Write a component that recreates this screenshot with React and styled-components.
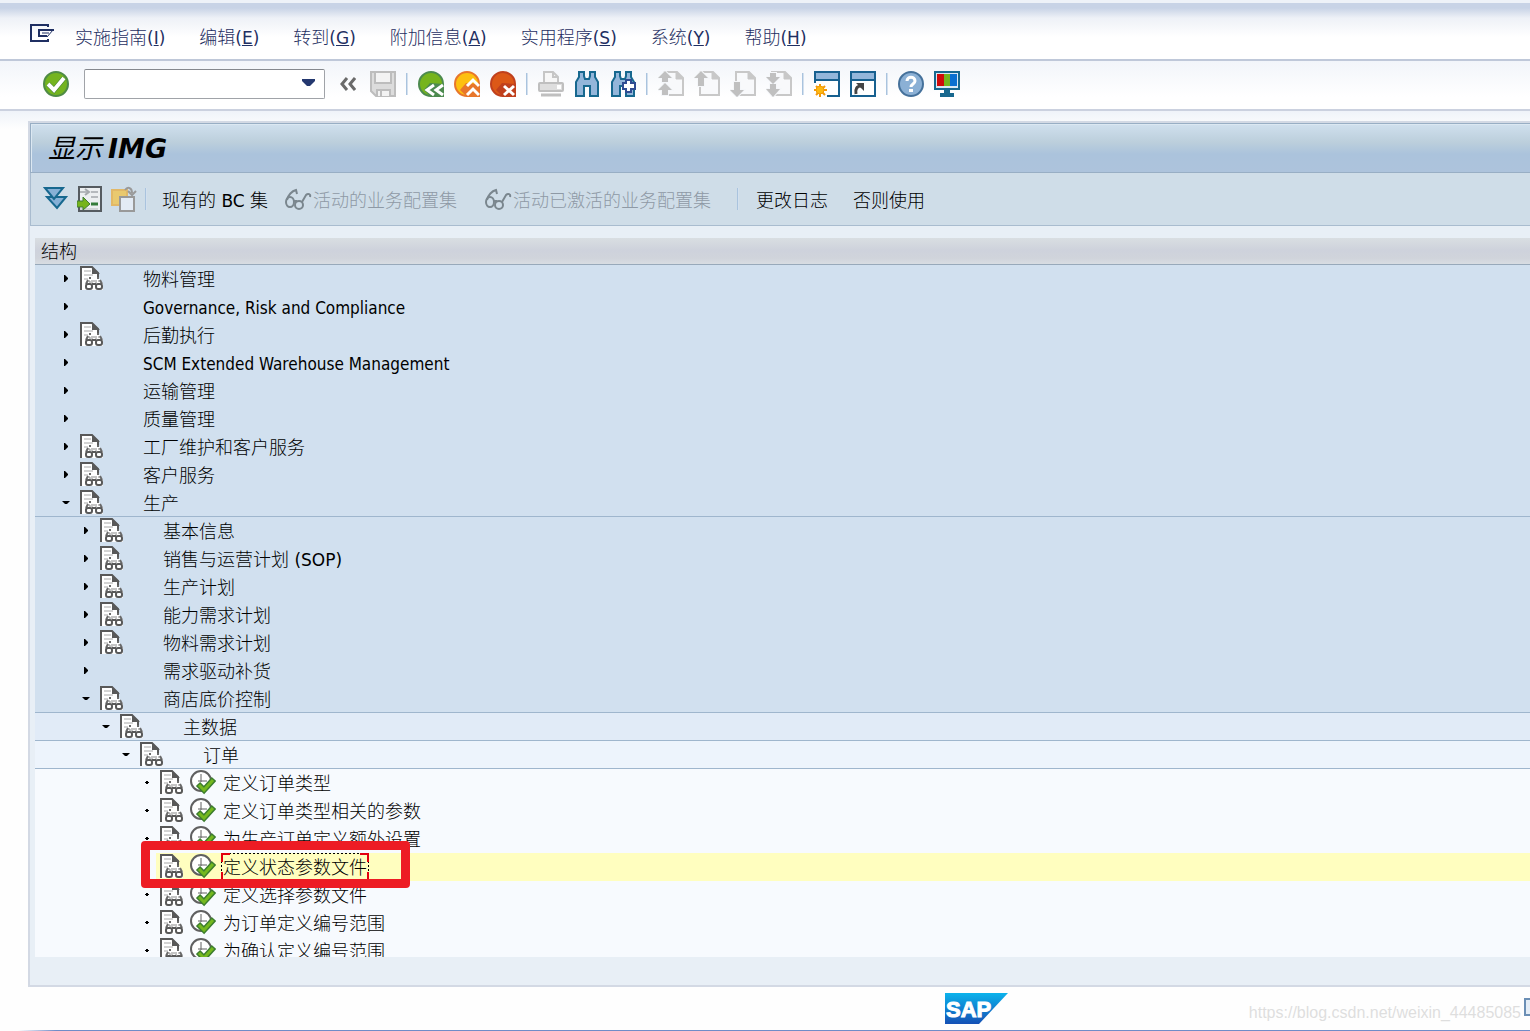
import React from 'react';
import styled, { createGlobalStyle, css } from 'styled-components';

const latinFont = "'DejaVu Sans', 'Noto Sans CJK SC', sans-serif";
const narrowFont = "'DejaVu Sans Condensed', 'DejaVu Sans', sans-serif";
const cjkFont = "'Noto Sans CJK SC', sans-serif";

const GlobalStyle = createGlobalStyle`
  *, *::before, *::after {
    box-sizing: border-box;
  }

  body {
    margin: 0;
    background: #fefefe;
    color: #000;
    font-family: ${cjkFont};
    font-size: 18px;
    font-weight: 300;
    line-height: 26px;
    overflow: hidden;
  }

  button, input {
    font: inherit;
    color: inherit;
  }

  svg {
    display: block;
    flex: none;
  }
`;

const StyledLatin = styled.span`
  font-family: ${({ $narrow }) => ($narrow ? narrowFont : latinFont)};
  font-size: 17px;
  font-weight: 400;
  line-height: 1;
`;

const StyledPage = styled.div`
  display: flex;
  flex-direction: column;
  height: 100vh;
  border-top: 3px solid #eef2f8;
`;

const StyledMenuBar = styled.nav`
  display: flex;
  align-items: center;
  flex: none;
  gap: 21px;
  height: 58px;
  padding: 4px 30px 0;
  border-bottom: 2px solid #bfc8d9;
  background: linear-gradient(#c8d3e6 0, #c8d3e6 5px, #eef1f7 15px, #fff 34px);
  color: #1f2f62;
`;

const StyledMenuList = styled.ul`
  display: flex;
  gap: 34px;
  margin: 0;
  padding: 6px 0 0;
  list-style: none;
  white-space: nowrap;
`;

const StyledMenuButton = styled.button`
  display: block;
  padding: 0;
  border: 0;
  background: none;
`;

const StyledToolbar = styled.div`
  display: flex;
  align-items: center;
  flex: none;
  gap: 10px;
  height: 50px;
  padding: 0 43px 2px;
  border-bottom: 2px solid #cbd1df;
  background: linear-gradient(#f2f5fa, #fff 36px);
`;

const StyledIconButton = styled.button`
  display: flex;
  align-items: center;
  justify-content: center;
  flex: none;
  width: ${({ $width }) => $width || 26}px;
  height: 26px;
  padding: 0;
  border: 0;
  background: none;
`;

const StyledSeparator = styled.span`
  flex: none;
  width: 2px;
  height: 22px;
  border-left: 1px solid #a9c3de;
  border-right: 1px solid #d3e0ee;
`;

const StyledCommandField = styled.div`
  display: flex;
  flex: none;
  width: 241px;
  height: 30px;
  margin-left: 5px;
  border: 1px solid #a0a3a8;
  border-top-color: #85888e;
  border-radius: 2px;
  background: #fff;
`;

const StyledCommandInput = styled.input`
  flex: 1;
  min-width: 0;
  padding: 0 5px;
  border: 0;
  outline: 0;
  background: none;
`;

const StyledWorkspace = styled.main`
  display: flex;
  flex: 1;
  min-height: 0;
  padding: 10px 0 0 28px;
  background: linear-gradient(#eff3f9, #fefefe 18px);
`;

const StyledPanel = styled.section`
  display: flex;
  flex-direction: column;
  flex: 1;
  min-width: 0;
  border: 2px solid #d3d9e4;
  border-right: 0;
  background: #e8eff6;
`;

const StyledTitleBar = styled.header`
  display: flex;
  align-items: center;
  flex: none;
  height: 50px;
  padding: 0 17px 2px;
  border: 1px solid #98aec4;
  border-right: 0;
  background: linear-gradient(#d0e0ee, #bccfdc 18px, #abc3dc 30px, #adc3dc);
  box-shadow: inset 1px 1px 0 #dce8f2;
`;

const StyledTitle = styled.h1`
  margin: 0;
  font-size: 27px;
  font-weight: 400;
  font-style: italic;
  line-height: 40px;

  b {
    font-family: ${latinFont};
    font-weight: 700;
    line-height: 1;
  }
`;

const StyledFunctionBar = styled.div`
  display: flex;
  align-items: center;
  flex: none;
  height: 53px;
  padding: 0 12px;
  border: 1px solid #a9bccf;
  border-top: 0;
  border-right: 0;
  background: #cfdde8;
`;

const StyledFunctionGroup = styled.div`
  display: flex;
  align-items: center;
  gap: ${({ $gap }) => $gap}px;
  margin-right: ${({ $after }) => $after || 0}px;
`;

const StyledFunctionButton = styled.button`
  display: flex;
  align-items: center;
  gap: 1px;
  padding: 0;
  border: 0;
  background: none;
  white-space: nowrap;

  &:disabled {
    color: #8e99a5;
  }
`;

const StyledTree = styled.div`
  display: flex;
  flex-direction: column;
  flex: 1;
  min-height: 0;
  margin: 12px 0 28px 5px;
`;

const StyledTreeHeader = styled.h2`
  flex: none;
  height: 27px;
  margin: 0;
  padding: 0 6px;
  border-bottom: 1px solid #98a9ba;
  background: linear-gradient(#d9dee2, #ced2dc 12px, #d0d4db 20px, #d8dde2);
  font-size: 18px;
  font-weight: 300;
  line-height: 24px;
`;

const StyledTreeBody = styled.ul`
  flex: 1;
  min-height: 0;
  margin: 0;
  padding: 0;
  overflow: hidden;
  list-style: none;
  background: #f7fafe;
`;

const rowColors = ['#d1e0ef', '#d1e0ef', '#e1ebf7', '#edf4fc', '#f7fafe'];

const StyledRow = styled.li`
  position: relative;
  display: flex;
  height: 28px;
  padding-left: ${({ $level }) => 20 + $level * 20}px;
  border-bottom: ${({ $open }) => ($open ? '1px solid #9fb6cd' : '0')};
  background: ${({ $level }) => rowColors[$level]};
`;

const StyledToggle = styled.button`
  display: flex;
  align-items: center;
  justify-content: center;
  flex: none;
  width: 21px;
  height: 27px;
  padding: 0;
  border: 0;
  background: none;
`;

const StyledNode = styled.div`
  display: flex;
  align-items: flex-start;
  flex: 1;
  padding-left: 4px;
  background: ${({ $selected }) => ($selected ? '#fffebf' : 'none')};
`;

const StyledIconSlot = styled.span`
  flex: none;
  width: ${({ $width }) => $width}px;
  padding-top: 1px;
`;

const focusFrame = css`
  background:
    linear-gradient(#e3000f, #e3000f) 0 0 / 9px 2px,
    linear-gradient(#e3000f, #e3000f) 0 0 / 2px 9px,
    linear-gradient(#e3000f, #e3000f) 100% 0 / 9px 2px,
    linear-gradient(#e3000f, #e3000f) 100% 0 / 2px 9px,
    linear-gradient(#e3000f, #e3000f) 0 100% / 2px 9px,
    linear-gradient(#e3000f, #e3000f) 100% 100% / 2px 9px,
    repeating-linear-gradient(90deg, #000 0 2px, transparent 2px 4px) 0 0 / 100% 1px,
    repeating-linear-gradient(#000 0 2px, transparent 2px 4px) 0 0 / 1px 100%,
    repeating-linear-gradient(#000 0 2px, transparent 2px 4px) 100% 0 / 1px 100%;
  background-repeat: no-repeat;
`;

const StyledLabel = styled.span`
  height: 28px;
  margin-left: -2px;
  padding: 0 2px;
  white-space: nowrap;
  ${({ $selected }) => $selected && focusFrame}
`;

const StyledMarker = styled.span`
  position: absolute;
  z-index: 1;
  top: -12px;
  left: 106px;
  width: 269px;
  height: 47px;
  border: 9px solid #ed1c24;
  border-radius: 4px;
`;

const StyledFooter = styled.footer`
  display: flex;
  align-items: center;
  justify-content: flex-end;
  flex: none;
  height: 44px;
  padding-bottom: 2px;
  background: linear-gradient(90deg, transparent 18px, #6f8cc8 56px) 0 100% / 100% 1px no-repeat;
  overflow: hidden;
`;

const StyledWatermark = styled.span`
  margin: 9px 3px 0 241px;
  color: #dedede;
  font-family: 'Liberation Sans', sans-serif;
  font-size: 16px;
  font-weight: 400;
`;

const StyledResize = styled.span`
  width: 6px;
  height: 18px;
  margin-bottom: 2px;
  border: 2px solid #6b8fb5;
  border-right: 0;
  background: #e4edf6;
`;

const MenuIcon = () => (
  <svg width="24" height="18" viewBox="0 0 24 18" fill="none" stroke="#1f2f62" strokeWidth="2">
    <path d="M18 3V1H1V17H18V15" />
    <path d="M24 6H9V12H17" />
    <path d="M12 9H19M23 6L17 13" strokeWidth="1" />
  </svg>
);

const CheckIcon = () => (
  <svg width="26" height="26" viewBox="0 0 26 26">
    <circle cx="13" cy="13" r="12" fill="#74b41f" stroke="#4f8b45" strokeWidth="2" />
    <path d="M5 13L11 19L21 7" fill="none" stroke="#3c7a32" strokeWidth="5" />
    <path d="M5 13L11 19L21 7" fill="none" stroke="#fff" strokeWidth="4" />
  </svg>
);

const DropIcon = () => (
  <svg width="13" height="8" viewBox="0 0 13 8">
    <path d="M0 0H13V2L8 7H5L0 2Z" fill="#24386f" />
  </svg>
);

const CollapseIcon = () => (
  <svg width="16" height="14" viewBox="0 0 16 14" fill="none" stroke="#6a6a6a" strokeWidth="3">
    <path d="M7 1L2 7L7 13M15 1L10 7L15 13" />
  </svg>
);

const SaveIcon = () => (
  <svg width="26" height="26" viewBox="0 0 26 26" stroke="#bdbdbd" strokeWidth="2">
    <path d="M1 1H25V25H6L1 20Z" fill="#dcdcdc" />
    <path d="M5 1H21V12H5Z" fill="#f3f3f3" />
    <path d="M7 25V19H20V25" fill="#f3f3f3" />
    <path d="M11 20V25" />
  </svg>
);

const RoundIcon = ({ fill, edge, children }) => (
  <svg width="26" height="26" viewBox="0 0 26 26">
    <circle cx="13" cy="13" r="12" fill={fill} stroke={edge} strokeWidth="2" />
    <path d="M26 13V26H13L6 19L12 12Z" fill={edge} />
    {children}
  </svg>
);

const BackIcon = () => (
  <RoundIcon fill="#76b41c" edge="#4c8a4e">
    <path d="M16 14L9 19L16 24M25 14L18 19L25 24" fill="none" stroke="#fff" strokeWidth="3" />
  </RoundIcon>
);

const ExitIcon = () => (
  <RoundIcon fill="#fdc010" edge="#e8762b">
    <path d="M13 15L19 9L25 15M13 24L19 18L25 24" fill="none" stroke="#fff" strokeWidth="3" />
  </RoundIcon>
);

const CancelIcon = () => (
  <RoundIcon fill="#dc5817" edge="#c0401d">
    <path d="M14 15L24 24M24 15L14 24" fill="none" stroke="#fff" strokeWidth="3" />
  </RoundIcon>
);

const PrintIcon = () => (
  <svg width="26" height="26" viewBox="0 0 26 26">
    <path d="M6 12V1H15L20 6V12" fill="#f7f7f7" stroke="#c6c6c6" strokeWidth="2" />
    <path d="M15 1V6H20" fill="none" stroke="#c6c6c6" strokeWidth="2" />
    <rect x="1" y="12" width="24" height="8" rx="1" fill="#dedede" stroke="#bfbfbf" strokeWidth="2" />
    <rect x="19" y="14" width="4" height="4" fill="#fff" />
    <path d="M3 24H23" stroke="#bfbfbf" strokeWidth="3" />
  </svg>
);

const BinocularShape = () => (
  <path
    d="M5 1H10V5L11 8H15L16 5V1H21V6L24 11V25H16V15H10V25H2V11L5 6Z"
    fill="#93b6da"
    stroke="#17688f"
    strokeWidth="2"
  />
);

const FindIcon = () => (
  <svg width="26" height="26" viewBox="0 0 26 26">
    <BinocularShape />
  </svg>
);

const FindNextIcon = () => (
  <svg width="26" height="26" viewBox="0 0 26 26">
    <BinocularShape />
    <path d="M16 9H21V12H25V18H21V21H16V18H13V12H16Z" fill="#fff" stroke="#2f4c92" strokeWidth="2" />
  </svg>
);

const pageArrows = {
  first: 'M7 0L14 7H10V11H4V7H0ZM7 12L14 19H10V24H4V19H0Z',
  previous: 'M7 0L14 7H10V15H4V7H0Z',
  next: 'M4 11H10V19H14L7 26L0 19H4Z',
  last: 'M4 2H10V6H14L7 13L0 6H4ZM4 13H10V18H14L7 26L0 18H4Z',
};

const PageIcon = ({ direction }) => (
  <svg width="26" height="26" viewBox="0 0 26 26">
    <path d="M6 1H19L25 7V24H6Z" fill="#f8f9fb" stroke="#c8c8c8" strokeWidth="2" />
    <path d="M18 1V8H25Z" fill="#c8c8c8" stroke="#c8c8c8" />
    <path
      d={pageArrows[direction]}
      fill="#c0c0c0"
      stroke="#f5f7fa"
      strokeWidth="2"
      paintOrder="stroke"
    />
  </svg>
);

const WindowFrame = ({ children }) => (
  <svg width="26" height="26" viewBox="0 0 26 26">
    <rect x="1" y="1" width="24" height="24" fill="#fff" stroke="#17608f" strokeWidth="2" />
    <rect x="2" y="2" width="22" height="6" fill="#93b6da" />
    <path d="M1 9H25" stroke="#17608f" strokeWidth="2" />
    {children}
  </svg>
);

const NewSessionIcon = () => (
  <WindowFrame>
    <path d="M0 12H13V26H0Z" fill="#fff" />
    <path
      d="M6 13V26M0 19H13M2 15L11 24M11 15L2 24"
      stroke="#f39a08"
      strokeWidth="2"
    />
    <circle cx="6" cy="19" r="4" fill="#fdb913" stroke="#f39a08" />
  </WindowFrame>
);

const ShortcutIcon = () => (
  <WindowFrame>
    <path d="M6 23C5 18 7 15 11 15" fill="none" stroke="#444" strokeWidth="3" />
    <path d="M6 12H14V20Z" fill="#444" />
  </WindowFrame>
);

const HelpIcon = () => (
  <svg width="26" height="26" viewBox="0 0 26 26">
    <circle cx="13" cy="13" r="12" fill="#8bb0d5" stroke="#45719b" strokeWidth="2" />
    <path d="M9 10C9 5 17 5 17 10C17 13 13 13 13 16" fill="none" stroke="#fff" strokeWidth="3" />
    <rect x="11" y="18" width="4" height="3" fill="#fff" />
  </svg>
);

const LayoutIcon = () => (
  <svg width="26" height="26" viewBox="0 0 26 26">
    <path d="M10 18H16V22H20V26H6V22H10Z" fill="#17688f" />
    <rect x="1" y="1" width="24" height="17" fill="#d9e8f5" stroke="#17688f" strokeWidth="2" />
    <path d="M3 3H10V15H3Z" fill="#cf0a0a" />
    <path d="M10 3H16V15H10Z" fill="#73b51c" />
    <path d="M16 3H23V15H16Z" fill="#0a6fd0" />
  </svg>
);

const ExpandIcon = () => (
  <svg width="26" height="26" viewBox="0 0 26 26" fill="#86b0d6" stroke="#17688f" strokeWidth="2">
    <path d="M4 11H23L14 22Z" />
    <path d="M2 2H20L11 13Z" />
  </svg>
);

const PositionIcon = () => (
  <svg width="26" height="26" viewBox="0 0 26 26">
    <rect x="2" y="1" width="22" height="24" fill="#eceff1" stroke="#555b60" strokeWidth="2" />
    <path d="M3 6H11M14 6H21M14 11H21" stroke="#b5b9bd" strokeWidth="2" />
    <path d="M8 3L12 6L8 9" fill="none" stroke="#a5a9ad" strokeWidth="2" />
    <path d="M14 18H21" stroke="#347b3a" strokeWidth="3" />
    <path d="M3 23H21" stroke="#b5b9bd" />
    <path d="M0 15H6V11L13 18L6 24V21H0Z" fill="#76b41c" stroke="#3f7c34" />
  </svg>
);

const CopyIcon = () => (
  <svg width="26" height="26" viewBox="0 0 26 26">
    <rect x="1" y="4" width="15" height="15" fill="#e9c96f" stroke="#e2b867" strokeWidth="2" />
    <rect x="9" y="11" width="14" height="14" fill="#e3ebf5" stroke="#999" strokeWidth="2" />
    <path d="M14 4C17 0 21 2 21 7M17 5L21 9L25 5" fill="none" stroke="#999" strokeWidth="2" />
  </svg>
);

const GlassesIcon = () => (
  <svg width="27" height="23" viewBox="0 0 27 23" fill="none" stroke="#7a868e" strokeWidth="2">
    <path d="M2 12C3 7 7 3 11 2L12 6" />
    <ellipse cx="5" cy="14" rx="4" ry="5" />
    <ellipse cx="14" cy="17" rx="4" ry="4" />
    <path d="M9 13L12 13M17 14L21 7C23 5 26 6 25 9" />
  </svg>
);

const DocIcon = () => (
  <svg width="24" height="24" viewBox="0 0 24 24">
    <path d="M1 24V1H12L19 8V12L23 18V24Z" fill="#fff" />
    <path d="M1 24V1H12L18 7V11" fill="none" stroke="#595959" strokeWidth="2" />
    <path d="M12 1V8H20Z" fill="#595959" />
    <path d="M4 5H11M4 9H13M4 13H8" stroke="#a8a8a8" />
    <path d="M9 12H11M17 12H19M8 14L6 18M20 14L22 18" stroke="#6a6a6a" strokeWidth="2" />
    <path d="M8 15H10V17M12 14V17M18 15H20M16 14V17M13 15H15" fill="none" stroke="#8a8a8a" />
    <rect x="6" y="18" width="6" height="5" rx="2" fill="#fff" stroke="#595959" strokeWidth="2" />
    <rect x="16" y="18" width="6" height="5" rx="2" fill="#fff" stroke="#595959" strokeWidth="2" />
    <path d="M12 18H16" stroke="#595959" strokeWidth="2" />
  </svg>
);

const ExecuteIcon = () => (
  <svg width="26" height="25" viewBox="0 0 26 25">
    <circle cx="11" cy="11" r="10" fill="#fff" stroke="#606060" strokeWidth="2" />
    <path d="M11 4V12M8 11H17" fill="none" stroke="#606060" strokeWidth="1" />
    <path d="M8 14L14 20L24 9" fill="none" stroke="#3c7d2e" strokeWidth="6" />
    <path d="M9 15L14 20L23 10" fill="none" stroke="#74b81e" strokeWidth="3" />
  </svg>
);

const arrowShapes = {
  closed: 'M3 1H4L7 4V5L4 8H3Z',
  open: 'M1 3H9L6 6H4Z',
  leaf: 'M5 3H7V4H8V5H7V6H5V5H4V4H5Z',
};

const ArrowIcon = ({ state }) => (
  <svg width="10" height="10" viewBox="0 0 10 10">
    <path d={arrowShapes[state]} fill="#000" />
  </svg>
);

const SapLogo = () => (
  <svg width="63" height="31" viewBox="0 0 63 31" role="img" aria-label="SAP">
    <defs>
      <linearGradient id="sap" x1="0" y1="0" x2="0" y2="1">
        <stop offset="0" stopColor="#0bb3ec" />
        <stop offset="1" stopColor="#1550b5" />
      </linearGradient>
    </defs>
    <path d="M0 0H63L34 31H0Z" fill="url(#sap)" />
    <text
      x="1"
      y="24"
      fill="#fff"
      stroke="#fff"
      fontFamily="Liberation Sans, sans-serif"
      fontSize="22"
      fontWeight="700"
    >
      SAP
    </text>
  </svg>
);

const menus = [
  ['实施指南', 'I'],
  ['编辑', 'E'],
  ['转到', 'G'],
  ['附加信息', 'A'],
  ['实用程序', 'S'],
  ['系统', 'Y'],
  ['帮助', 'H'],
];

const toolGroups = [
  [
    ['返回', <BackIcon />],
    ['退出', <ExitIcon />],
    ['取消', <CancelIcon />],
  ],
  [
    ['打印', <PrintIcon />],
    ['查找', <FindIcon />],
    ['查找下一个', <FindNextIcon />],
  ],
  [
    ['第一页', <PageIcon direction="first" />],
    ['上一页', <PageIcon direction="previous" />],
    ['下一页', <PageIcon direction="next" />],
    ['最后一页', <PageIcon direction="last" />],
  ],
  [
    ['创建会话', <NewSessionIcon />],
    ['创建快捷方式', <ShortcutIcon />],
  ],
  [
    ['帮助', <HelpIcon />],
    ['自定义布局', <LayoutIcon />],
  ],
];

const nodes = [
  { level: 0, label: '物料管理', doc: true },
  { level: 0, label: 'Governance, Risk and Compliance' },
  { level: 0, label: '后勤执行', doc: true },
  { level: 0, label: 'SCM Extended Warehouse Management' },
  { level: 0, label: '运输管理' },
  { level: 0, label: '质量管理' },
  { level: 0, label: '工厂维护和客户服务', doc: true },
  { level: 0, label: '客户服务', doc: true },
  { level: 0, label: '生产', doc: true, open: true },
  { level: 1, label: '基本信息', doc: true },
  { level: 1, label: '销售与运营计划 (SOP)', doc: true },
  { level: 1, label: '生产计划', doc: true },
  { level: 1, label: '能力需求计划', doc: true },
  { level: 1, label: '物料需求计划', doc: true },
  { level: 1, label: '需求驱动补货' },
  { level: 1, label: '商店底价控制', doc: true, open: true },
  { level: 2, label: '主数据', doc: true, open: true },
  { level: 3, label: '订单', doc: true, open: true },
  { level: 4, label: '定义订单类型', doc: true, leaf: true },
  { level: 4, label: '定义订单类型相关的参数', doc: true, leaf: true },
  { level: 4, label: '为生产订单定义额外设置', doc: true, leaf: true },
  { level: 4, label: '定义状态参数文件', doc: true, leaf: true, selected: true },
  { level: 4, label: '定义选择参数文件', doc: true, leaf: true },
  { level: 4, label: '为订单定义编号范围', doc: true, leaf: true },
  { level: 4, label: '为确认定义编号范围', doc: true, leaf: true },
];

const arrowState = ({ leaf, open }) => {
  if (leaf) return 'leaf';
  return open ? 'open' : 'closed';
};

// Latin runs are set in their own face, heavier than the Chinese one;
// a label that is Latin throughout takes the narrow cut
const MixedText = ({ text }) =>
  text
    .split(/([ -~]+)/)
    .filter(Boolean)
    .map((part, index) =>
      /^[ -~]/.test(part) ? (
        <StyledLatin key={index} $narrow={part === text}>
          {part}
        </StyledLatin>
      ) : (
        part
      )
    );

const TreeRow = ({ node }) => (
  <StyledRow $level={node.level} $open={node.open}>
    <StyledToggle aria-label={node.label} disabled={node.leaf}>
      <ArrowIcon state={arrowState(node)} />
    </StyledToggle>
    <StyledNode $selected={node.selected}>
      <StyledIconSlot $width={30}>{node.doc && <DocIcon />}</StyledIconSlot>
      <StyledIconSlot $width={33}>{node.leaf && <ExecuteIcon />}</StyledIconSlot>
      <StyledLabel $selected={node.selected}>
        <MixedText text={node.label} />
      </StyledLabel>
    </StyledNode>
    {node.selected && <StyledMarker />}
  </StyledRow>
);

const App = () => (
  <StyledPage>
    <GlobalStyle />
    <StyledMenuBar>
      <MenuIcon />
      <StyledMenuList>
        {menus.map(([label, key]) => (
          <li key={key}>
            <StyledMenuButton>
              {label}
              <StyledLatin>
                (<u>{key}</u>)
              </StyledLatin>
            </StyledMenuButton>
          </li>
        ))}
      </StyledMenuList>
    </StyledMenuBar>
    <StyledToolbar>
      <StyledIconButton aria-label="回车">
        <CheckIcon />
      </StyledIconButton>
      <StyledCommandField>
        <StyledCommandInput aria-label="命令" />
        <StyledIconButton $width={32} aria-label="命令历史">
          <DropIcon />
        </StyledIconButton>
      </StyledCommandField>
      <StyledIconButton $width={25} aria-label="隐藏命令字段">
        <CollapseIcon />
      </StyledIconButton>
      <StyledIconButton aria-label="保存">
        <SaveIcon />
      </StyledIconButton>
      {toolGroups.map((group, index) => (
        <React.Fragment key={index}>
          <StyledSeparator />
          {group.map(([label, icon]) => (
            <StyledIconButton key={label} aria-label={label}>
              {icon}
            </StyledIconButton>
          ))}
        </React.Fragment>
      ))}
    </StyledToolbar>
    <StyledWorkspace>
      <StyledPanel>
        <StyledTitleBar>
          <StyledTitle>
            显示 <b>IMG</b>
          </StyledTitle>
        </StyledTitleBar>
        <StyledFunctionBar>
          <StyledFunctionGroup $gap={8} $after={15}>
            <StyledIconButton aria-label="展开">
              <ExpandIcon />
            </StyledIconButton>
            <StyledIconButton aria-label="定位">
              <PositionIcon />
            </StyledIconButton>
            <StyledIconButton aria-label="复制">
              <CopyIcon />
            </StyledIconButton>
            <StyledSeparator />
          </StyledFunctionGroup>
          <StyledFunctionGroup $gap={17} $after={28}>
            <StyledFunctionButton>
              <span>
                <MixedText text="现有的 BC 集" />
              </span>
            </StyledFunctionButton>
            <StyledFunctionButton disabled>
              <GlassesIcon />
              活动的业务配置集
            </StyledFunctionButton>
          </StyledFunctionGroup>
          <StyledFunctionGroup $gap={26} $after={17}>
            <StyledFunctionButton disabled>
              <GlassesIcon />
              活动已激活的业务配置集
            </StyledFunctionButton>
            <StyledSeparator />
          </StyledFunctionGroup>
          <StyledFunctionGroup $gap={25}>
            <StyledFunctionButton>更改日志</StyledFunctionButton>
            <StyledFunctionButton>否则使用</StyledFunctionButton>
          </StyledFunctionGroup>
        </StyledFunctionBar>
        <StyledTree>
          <StyledTreeHeader>结构</StyledTreeHeader>
          <StyledTreeBody>
            {nodes.map((node) => (
              <TreeRow key={node.label} node={node} />
            ))}
          </StyledTreeBody>
        </StyledTree>
      </StyledPanel>
    </StyledWorkspace>
    <StyledFooter>
      <SapLogo />
      <StyledWatermark>https://blog.csdn.net/weixin_44485085</StyledWatermark>
      <StyledResize />
    </StyledFooter>
  </StyledPage>
);

export default App;
